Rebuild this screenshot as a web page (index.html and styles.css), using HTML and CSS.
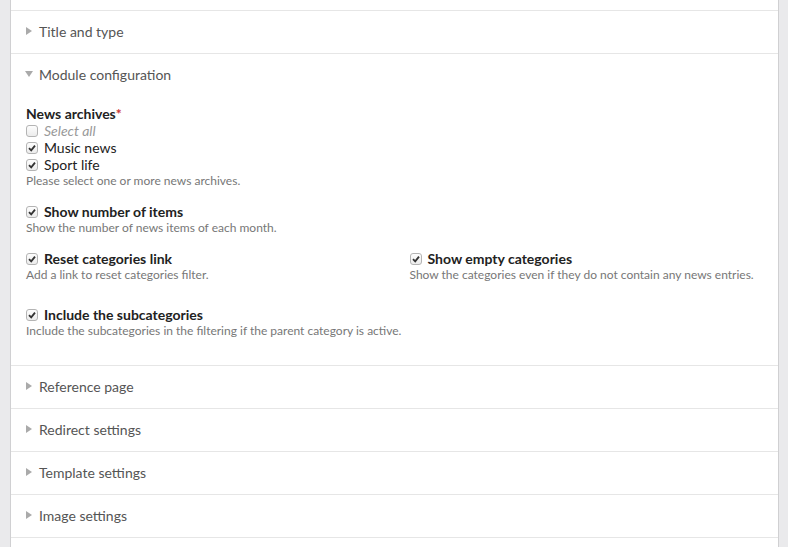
FILE: index.html
```html
<!DOCTYPE html>
<html lang="en">
  <head>
    <meta charset="UTF-8" />
    <title>Module configuration</title>
    <link rel="stylesheet" href="styles.css">
  </head>
  <body>
    <div class="panel">
      <div class="top"></div>

      <div class="section">
        <div class="legend"><span class="arrow closed"></span>Title and type</div>
      </div>

      <div class="section">
        <div class="legend"><span class="arrow open"></span>Module configuration</div>
        <div class="content">
          <div class="widget">
            <div class="label">News archives<span class="mandatory">*</span></div>
            <div class="check-row all"><span class="box"></span>Select all</div>
            <div class="check-row"><span class="box checked"><svg viewBox="0 0 10 10"><path d="M2 5.2 L4.2 7.4 L8 2.6" /></svg></span>Music news</div>
            <div class="check-row"><span class="box checked"><svg viewBox="0 0 10 10"><path d="M2 5.2 L4.2 7.4 L8 2.6" /></svg></span>Sport life</div>
            <p class="help">Please select one or more news archives.</p>
          </div>

          <div class="widget">
            <div class="check-row single"><span class="box checked"><svg viewBox="0 0 10 10"><path d="M2 5.2 L4.2 7.4 L8 2.6" /></svg></span>Show number of items</div>
            <p class="help">Show the number of news items of each month.</p>
          </div>

          <div class="widget-row">
            <div class="widget half">
              <div class="check-row single"><span class="box checked"><svg viewBox="0 0 10 10"><path d="M2 5.2 L4.2 7.4 L8 2.6" /></svg></span>Reset categories link</div>
              <p class="help">Add a link to reset categories filter.</p>
            </div>
            <div class="widget half">
              <div class="check-row single"><span class="box checked"><svg viewBox="0 0 10 10"><path d="M2 5.2 L4.2 7.4 L8 2.6" /></svg></span>Show empty categories</div>
              <p class="help">Show the categories even if they do not contain any news entries.</p>
            </div>
          </div>

          <div class="widget clear">
            <div class="check-row single"><span class="box checked"><svg viewBox="0 0 10 10"><path d="M2 5.2 L4.2 7.4 L8 2.6" /></svg></span>Include the subcategories</div>
            <p class="help">Include the subcategories in the filtering if the parent category is active.</p>
          </div>
        </div>
      </div>

      <div class="section">
        <div class="legend"><span class="arrow closed"></span>Reference page</div>
      </div>
      <div class="section">
        <div class="legend"><span class="arrow closed"></span>Redirect settings</div>
      </div>
      <div class="section">
        <div class="legend"><span class="arrow closed"></span>Template settings</div>
      </div>
      <div class="section">
        <div class="legend"><span class="arrow closed"></span>Image settings</div>
      </div>
      <div class="section"></div>
    </div>
  </body>
</html>
```

FILE: styles.css
```css
body {
  margin: 0;
  background: #eaeaec;
  font-family: Lato, "Open Sans", sans-serif;
  color: #222;
}

.panel {
  margin: 0 9px 0 10px;
  background: #fff;
  border-left: 1px solid #d0d0d2;
  border-right: 1px solid #d0d0d2;
  height: 547px;
  overflow: hidden;
}

.top {
  height: 10px;
}

.section {
  border-top: 1px solid #e6e6e6;
}

.legend {
  box-sizing: border-box;
  height: 42px;
  display: flex;
  align-items: center;
  padding: 0 0 2px 15px;
  font-size: 14px;
  color: #555;
}

.arrow {
  width: 0;
  height: 0;
}

.arrow.closed {
  border-top: 4px solid transparent;
  border-bottom: 4px solid transparent;
  border-left: 6px solid #aaa;
  margin-right: 7px;
}

.arrow.open {
  border-left: 4px solid transparent;
  border-right: 4px solid transparent;
  border-top: 6px solid #aaa;
  margin-left: -1px;
  margin-right: 6px;
}

.content {
  padding: 10px 0 26px;
}

.widget {
  padding: 0 15px;
  margin-top: 14px;
}

.widget:first-child {
  margin-top: 0;
}

.widget.clear {
  margin-top: 23px;
}

.widget-row {
  display: flex;
  margin-top: 14px;
}

.widget-row .widget.half {
  flex: 1;
  min-width: 0;
  margin-top: 0;
}

.label {
  font-size: 14px;
  font-weight: 700;
  line-height: 16px;
}

.mandatory {
  color: #c33;
}

.check-row {
  display: flex;
  align-items: center;
  font-size: 14px;
  line-height: 17px;
  height: 17px;
}

.check-row.single {
  font-weight: 700;
}

.check-row.all {
  font-style: italic;
  color: #999;
}

.box {
  box-sizing: border-box;
  width: 12px;
  height: 12px;
  border: 1px solid #b4b4b4;
  border-radius: 3px;
  background: linear-gradient(#fdfdfd, #ececec);
  margin-right: 6px;
  display: flex;
}

.box svg {
  width: 10px;
  height: 10px;
}

.box path {
  fill: none;
  stroke: #333;
  stroke-width: 1.8;
}

.help {
  margin: 0;
  font-size: 12px;
  line-height: 16px;
  color: #777;
}
```
